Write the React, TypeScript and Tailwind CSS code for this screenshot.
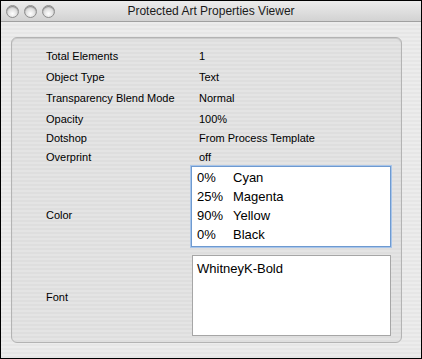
import React from 'react'

type Row = { label: string; value: string; h: string }

const rows: Row[] = [
  { label: 'Total Elements', value: '1', h: 'h-[21px]' },
  { label: 'Object Type', value: 'Text', h: 'h-[21px]' },
  { label: 'Transparency Blend Mode', value: 'Normal', h: 'h-[21px]' },
  { label: 'Opacity', value: '100%', h: 'h-[20px]' },
  { label: 'Dotshop', value: 'From Process Template', h: 'h-[19px]' },
  { label: 'Overprint', value: 'off', h: 'h-[18px]' },
]

const inks = [
  { pct: '0%', name: 'Cyan' },
  { pct: '25%', name: 'Magenta' },
  { pct: '90%', name: 'Yellow' },
  { pct: '0%', name: 'Black' },
]

function Light() {
  return (
    <div className="w-[13px] h-[13px] rounded-full border border-[#8e8e8e] bg-[radial-gradient(circle_at_50%_70%,#ffffff_0%,#e2e2e2_45%,#b9b9b9_100%)] shadow-[inset_0_1px_1px_rgba(0,0,0,0.35)]" />
  )
}

export default function App() {
  return (
    <div
      className="w-[422px] h-[359px] border border-black flex flex-col overflow-hidden text-black"
      style={{ fontFamily: '"Liberation Sans", Arial, sans-serif' }}
    >
      <div className="relative h-[21px] shrink-0 flex items-center bg-[linear-gradient(#ececec,#d2d2d2)] border-b border-[#a0a0a0]">
        <div className="flex gap-[5px] pl-[5px]">
          <Light />
          <Light />
          <Light />
        </div>
        <div className="absolute inset-0 flex items-center justify-center text-[12px] text-[#1a1a1a]">
          Protected Art Properties Viewer
        </div>
      </div>
      <div className="flex-1 bg-[repeating-linear-gradient(#ececec_0px,#ececec_2px,#e6e6e6_2px,#e6e6e6_4px)] pt-[15px] pl-[10px]">
        <div className="w-[391px] h-[306px] rounded-[6px] border border-[#b3b3b3] bg-[repeating-linear-gradient(#e4e4e4_0px,#e4e4e4_2px,#dedede_2px,#dedede_4px)] shadow-[inset_0_1px_1px_rgba(0,0,0,0.12)] pt-[8px] pl-[34px] text-[11px]">
          {rows.map((r) => (
            <div key={r.label} className={`flex items-center ${r.h}`}>
              <div className="w-[153px]">{r.label}</div>
              <div>{r.value}</div>
            </div>
          ))}
          <div className="flex">
            <div className="w-[145px] pt-[41px]">Color</div>
            <div className="w-[200px] h-[81px] border border-[#6e9ad0] shadow-[0_0_0_1px_#a8c5ea] bg-white pt-[1px] pl-[5px] text-[13px]">
              {inks.map((i) => (
                <div key={i.name} className="flex h-[19px] items-center">
                  <div className="w-[36px]">{i.pct}</div>
                  <div>{i.name}</div>
                </div>
              ))}
            </div>
          </div>
          <div className="flex mt-[8px]">
            <div className="w-[146px] pt-[34px]">Font</div>
            <div className="w-[199px] h-[81px] border border-[#a6a6a6] bg-white pl-[4px] pt-[3px] text-[13px]">
              WhitneyK-Bold
            </div>
          </div>
        </div>
      </div>
    </div>
  )
}
